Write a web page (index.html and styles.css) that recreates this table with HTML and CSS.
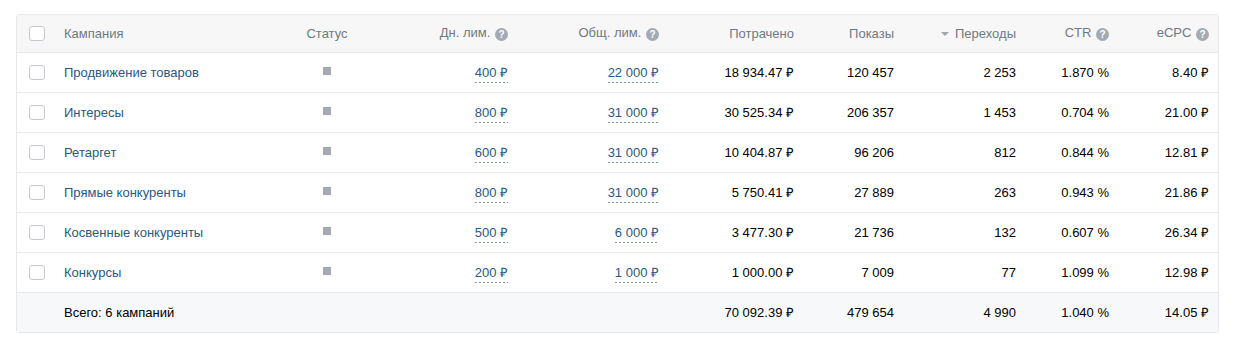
FILE: index.html
```html
<!DOCTYPE html>
<html lang="ru">
<head>
    <meta charset="UTF-8">
    <title>Кампании</title>
    <link rel="stylesheet" href="styles.css">
</head>
<body>

    <div class="campaigns">
        <table class="campaigns-table">
            <colgroup>
                <col class="col-check">
                <col class="col-name">
                <col class="col-status">
                <col class="col-day">
                <col class="col-total">
                <col class="col-spent">
                <col class="col-views">
                <col class="col-clicks">
                <col class="col-ctr">
                <col class="col-ecpc">
            </colgroup>
            <thead>
                <tr>
                    <th class="cell-check"><span class="checkbox"></span></th>
                    <th class="cell-name">Кампания</th>
                    <th class="cell-status">Статус</th>
                    <th class="cell-num">Дн. лим. <span class="hint">?</span></th>
                    <th class="cell-num">Общ. лим. <span class="hint">?</span></th>
                    <th class="cell-num">Потрачено</th>
                    <th class="cell-num">Показы</th>
                    <th class="cell-num"><span class="sort-arrow"></span>Переходы</th>
                    <th class="cell-num">CTR <span class="hint">?</span></th>
                    <th class="cell-num cell-last">eCPC <span class="hint">?</span></th>
                </tr>
            </thead>
            <tbody>
                <tr>
                    <td class="cell-check"><span class="checkbox"></span></td>
                    <td class="cell-name"><a class="campaign-link" href="#">Продвижение товаров</a></td>
                    <td class="cell-status"><span class="status-dot"></span></td>
                    <td class="cell-num"><span class="limit">400 ₽</span></td>
                    <td class="cell-num"><span class="limit">22 000 ₽</span></td>
                    <td class="cell-num">18 934.47 ₽</td>
                    <td class="cell-num">120 457</td>
                    <td class="cell-num">2 253</td>
                    <td class="cell-num">1.870 %</td>
                    <td class="cell-num cell-last">8.40 ₽</td>
                </tr>
                <tr>
                    <td class="cell-check"><span class="checkbox"></span></td>
                    <td class="cell-name"><a class="campaign-link" href="#">Интересы</a></td>
                    <td class="cell-status"><span class="status-dot"></span></td>
                    <td class="cell-num"><span class="limit">800 ₽</span></td>
                    <td class="cell-num"><span class="limit">31 000 ₽</span></td>
                    <td class="cell-num">30 525.34 ₽</td>
                    <td class="cell-num">206 357</td>
                    <td class="cell-num">1 453</td>
                    <td class="cell-num">0.704 %</td>
                    <td class="cell-num cell-last">21.00 ₽</td>
                </tr>
                <tr>
                    <td class="cell-check"><span class="checkbox"></span></td>
                    <td class="cell-name"><a class="campaign-link" href="#">Ретаргет</a></td>
                    <td class="cell-status"><span class="status-dot"></span></td>
                    <td class="cell-num"><span class="limit">600 ₽</span></td>
                    <td class="cell-num"><span class="limit">31 000 ₽</span></td>
                    <td class="cell-num">10 404.87 ₽</td>
                    <td class="cell-num">96 206</td>
                    <td class="cell-num">812</td>
                    <td class="cell-num">0.844 %</td>
                    <td class="cell-num cell-last">12.81 ₽</td>
                </tr>
                <tr>
                    <td class="cell-check"><span class="checkbox"></span></td>
                    <td class="cell-name"><a class="campaign-link" href="#">Прямые конкуренты</a></td>
                    <td class="cell-status"><span class="status-dot"></span></td>
                    <td class="cell-num"><span class="limit">800 ₽</span></td>
                    <td class="cell-num"><span class="limit">31 000 ₽</span></td>
                    <td class="cell-num">5 750.41 ₽</td>
                    <td class="cell-num">27 889</td>
                    <td class="cell-num">263</td>
                    <td class="cell-num">0.943 %</td>
                    <td class="cell-num cell-last">21.86 ₽</td>
                </tr>
                <tr>
                    <td class="cell-check"><span class="checkbox"></span></td>
                    <td class="cell-name"><a class="campaign-link" href="#">Косвенные конкуренты</a></td>
                    <td class="cell-status"><span class="status-dot"></span></td>
                    <td class="cell-num"><span class="limit">500 ₽</span></td>
                    <td class="cell-num"><span class="limit">6 000 ₽</span></td>
                    <td class="cell-num">3 477.30 ₽</td>
                    <td class="cell-num">21 736</td>
                    <td class="cell-num">132</td>
                    <td class="cell-num">0.607 %</td>
                    <td class="cell-num cell-last">26.34 ₽</td>
                </tr>
                <tr>
                    <td class="cell-check"><span class="checkbox"></span></td>
                    <td class="cell-name"><a class="campaign-link" href="#">Конкурсы</a></td>
                    <td class="cell-status"><span class="status-dot"></span></td>
                    <td class="cell-num"><span class="limit">200 ₽</span></td>
                    <td class="cell-num"><span class="limit">1 000 ₽</span></td>
                    <td class="cell-num">1 000.00 ₽</td>
                    <td class="cell-num">7 009</td>
                    <td class="cell-num">77</td>
                    <td class="cell-num">1.099 %</td>
                    <td class="cell-num cell-last">12.98 ₽</td>
                </tr>
            </tbody>
            <tfoot>
                <tr>
                    <td class="cell-check"></td>
                    <td class="cell-name">Всего: 6 кампаний</td>
                    <td class="cell-status"></td>
                    <td class="cell-num"></td>
                    <td class="cell-num"></td>
                    <td class="cell-num">70 092.39 ₽</td>
                    <td class="cell-num">479 654</td>
                    <td class="cell-num">4 990</td>
                    <td class="cell-num">1.040 %</td>
                    <td class="cell-num cell-last">14.05 ₽</td>
                </tr>
            </tfoot>
        </table>
    </div>

</body>
</html>
```

FILE: styles.css
```css
/* Reset */
*, *::before, *::after {
    box-sizing: border-box;
    margin: 0;
    padding: 0;
}

body {
    font-family: 'Liberation Sans', Arial, sans-serif;
    font-size: 13px;
    color: #000;
    background: #fff;
}

/* Wrapper */
.campaigns {
    padding: 14px 15px 0 16px;
}

.campaigns-table {
    width: 1203px;
    table-layout: fixed;
    border-collapse: separate;
    border-spacing: 0;
    border: 1px solid #e7e8ec;
    border-radius: 3px;
    box-shadow: 0 1px 1px rgba(0, 0, 0, 0.03);
}

/* Column widths */
.col-check  { width: 47px; }
.col-name   { width: 226px; }
.col-status { width: 74px; }
.col-day    { width: 144px; }
.col-total  { width: 151px; }
.col-spent  { width: 135px; }
.col-views  { width: 100px; }
.col-clicks { width: 122px; }
.col-ctr    { width: 93px; }
.col-ecpc   { width: 109px; }

/* Cells */
th, td {
    height: 40px;
    line-height: 15px;
    white-space: nowrap;
    font-weight: normal;
    vertical-align: middle;
    border-bottom: 1px solid #e7e8ec;
}

thead th {
    height: 38px;
    padding-bottom: 1px;
    background-color: #f7f7f7;
    color: #6f7985;
}

tfoot td {
    height: 39px;
    border-bottom: none;
    background-color: #f7f8fa;
}

.cell-check {
    padding-left: 12px;
    text-align: left;
}

.cell-name {
    text-align: left;
}

.cell-status {
    text-align: center;
}

.cell-num {
    text-align: right;
}

.cell-last {
    padding-right: 9px;
}

/* Checkbox */
.checkbox {
    display: block;
    width: 16px;
    height: 15px;
    border: 1px solid #c5c9cf;
    border-radius: 3px;
    background: #fff;
}

/* Campaign name */
.campaign-link {
    color: #2a5885;
    text-decoration: none;
}

/* Status marker */
.status-dot {
    display: inline-block;
    width: 8px;
    height: 8px;
    background-color: #a6abb3;
    vertical-align: 2px;
}

/* Editable limit with dashed underline */
.limit {
    display: inline-block;
    color: #2a5885;
    padding-bottom: 3px;
    margin-top: 3px;
    background-image: linear-gradient(to right, #7f98b5 50%, transparent 50%);
    background-size: 4px 1px;
    background-repeat: repeat-x;
    background-position: left bottom;
}

/* Help icon */
.hint {
    display: inline-block;
    width: 13px;
    height: 13px;
    margin-left: 1px;
    border-radius: 50%;
    background-color: #a3aab3;
    color: #fff;
    font-size: 10px;
    font-weight: bold;
    line-height: 13px;
    text-align: center;
    vertical-align: -1px;
}

/* Sort direction */
.sort-arrow {
    display: inline-block;
    width: 0;
    height: 0;
    margin-right: 6px;
    border-left: 4px solid transparent;
    border-right: 4px solid transparent;
    border-top: 4px solid #a0a8b2;
    vertical-align: 2px;
}
```
